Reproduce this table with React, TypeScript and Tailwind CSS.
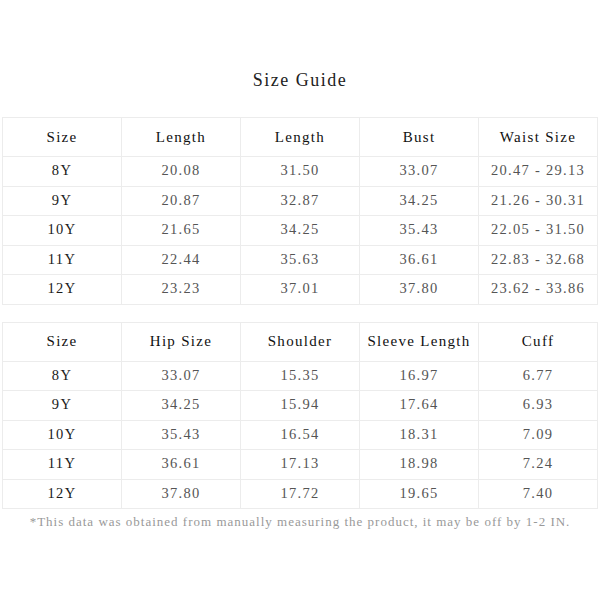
import React from "react";

const t1Head = ["Size", "Length", "Length", "Bust", "Waist Size"];
const t1Rows = [
  ["8Y", "20.08", "31.50", "33.07", "20.47 - 29.13"],
  ["9Y", "20.87", "32.87", "34.25", "21.26 - 30.31"],
  ["10Y", "21.65", "34.25", "35.43", "22.05 - 31.50"],
  ["11Y", "22.44", "35.63", "36.61", "22.83 - 32.68"],
  ["12Y", "23.23", "37.01", "37.80", "23.62 - 33.86"],
];
const t2Head = ["Size", "Hip Size", "Shoulder", "Sleeve Length", "Cuff"];
const t2Rows = [
  ["8Y", "33.07", "15.35", "16.97", "6.77"],
  ["9Y", "34.25", "15.94", "17.64", "6.93"],
  ["10Y", "35.43", "16.54", "18.31", "7.09"],
  ["11Y", "36.61", "17.13", "18.98", "7.24"],
  ["12Y", "37.80", "17.72", "19.65", "7.40"],
];

function Table({ head, rows }: { head: string[]; rows: string[][] }) {
  return (
    <div className="mx-[2px] grid grid-cols-5 border-l border-t border-[#ececec]">
      {head.map((h, i) => (
        <div
          key={"h" + i}
          className="flex h-[39px] items-center justify-center whitespace-pre border-b border-r border-[#ececec] text-[15px] tracking-[1.3px] text-[#111111]"
        >
          {h}
        </div>
      ))}
      {rows.map((r, ri) =>
        r.map((c, ci) => (
          <div
            key={ri + "-" + ci}
            className={
              "flex h-[29.5px] items-center justify-center whitespace-pre border-b border-r border-[#ececec] text-[14.5px] tracking-[1.3px] " +
              (ci === 0 ? "text-[#1a1a1a]" : "text-[#555555]")
            }
          >
            {c}
          </div>
        ))
      )}
    </div>
  );
}

export default function App() {
  return (
    <div
      className="flex h-[600px] w-[600px] flex-col bg-white"
      style={{ fontFamily: '"Liberation Serif", "Noto Sans CJK SC", serif' }}
    >
      <div className="pt-[68px] text-center text-[18px] leading-[24px] tracking-[1.5px] text-[#222222]">
        Size Guide
      </div>
      <div className="mt-[25px]">
        <Table head={t1Head} rows={t1Rows} />
      </div>
      <div className="mt-[17px]">
        <Table head={t2Head} rows={t2Rows} />
      </div>
      <div className="mt-[4px] text-center text-[13px] leading-[18px] tracking-[1px] text-[#999999]">
        *This data was obtained from manually measuring the product, it may be off by 1-2 IN.
      </div>
    </div>
  );
}
